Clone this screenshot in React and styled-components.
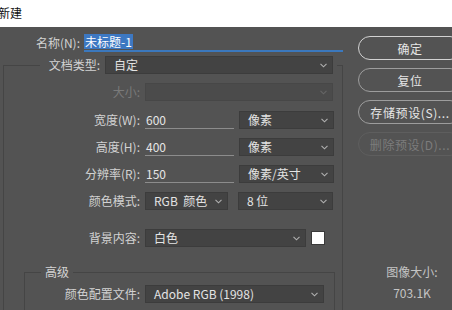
import React from 'react'
import { styled, createGlobalStyle } from 'styled-components'

const Global = createGlobalStyle`
    html, body {
        margin: 0;
        height: 100%;
        overflow: hidden;
        background: #535353;
        font-family: "Noto Sans CJK SC", "Noto Sans", sans-serif;
        font-size: 12px;
    }
`

const TitleBar = styled.div`
    height: 27px;
    background: #fff;
    color: #111;
    font-size: 12px;
    line-height: 26px;
    padding-left: 0;
    text-indent: -2px;
`

const Body = styled.div`
    display: flex;
    gap: 15px;
`

const LeftColumn = styled.div`
    width: 343px;
    flex-shrink: 0;
    padding-top: 8px;
`

const RightColumn = styled.div`
    width: 104px;
    flex-shrink: 0;
    padding-top: 9px;
    display: flex;
    flex-direction: column;
    gap: 8px;
`

const NameRow = styled.div`
    display: flex;
    align-items: center;
    height: 16px;
`

const Label = styled.span`
    width: ${props => props.$w}px;
    flex-shrink: 0;
    text-align: right;
    margin-right: 5px;
    color: ${props => props.$disabled ? '#7a7a7a' : '#d2d2d2'};
    white-space: nowrap;
    line-height: 16px;
`

const NameField = styled.div`
    flex: 1;
    height: 16px;
    border-bottom: 2px solid #3b78bd;
    box-sizing: content-box;
    display: flex;
    align-items: flex-start;
`

const Selected = styled.span`
    background: #3d78c2;
    color: #fff;
    line-height: 15px;
    padding: 0 1px;
`

const Group = styled.fieldset`
    margin: ${props => props.$inner ? '17px 7px 0 20px' : '5px 0 0 3px'};
    padding: ${props => props.$inner ? '5px 0 20px 0' : '9px 0 30px 0'};
    border: 1px solid #454545;
    min-width: 0;
`

const Legend = styled.legend`
    margin-left: ${props => props.$offset}px;
    padding: 0 4px 0 4px;
    color: #d4d4d4;
    line-height: 16px;
`

const LegendRow = styled.div`
    display: flex;
    align-items: center;
`

const Rows = styled.div`
    display: flex;
    flex-direction: column;
    gap: 9px;
`

const Row = styled.div`
    display: flex;
    align-items: center;
    height: 18px;
    margin-top: ${props => props.$extra || 0}px;
`

const SelectBox = styled.div`
    width: ${props => props.$w}px;
    height: 18px;
    box-sizing: border-box;
    flex-shrink: 0;
    margin-left: ${props => props.$ml || 0}px;
    background: ${props => props.$disabled ? '#4b4b4b' : '#434343'};
    border: 1px solid ${props => props.$disabled ? '#474747' : '#3c3c3c'};
    display: flex;
    align-items: center;
    justify-content: space-between;
    padding: 0 5px 0 8px;
    color: #e4e4e4;
    line-height: 16px;
    white-space: pre;
`

const Chevron = styled.svg`
    width: 7px;
    height: 5px;
    flex-shrink: 0;
`

const NumberField = styled.div`
    width: 88px;
    height: 17px;
    flex-shrink: 0;
    border-bottom: 1px solid #8c8c8c;
    color: #e6e6e6;
    line-height: 17px;
    padding-left: 1px;
    box-sizing: content-box;
`

const Swatch = styled.div`
    width: 14px;
    height: 14px;
    box-sizing: border-box;
    margin-left: 5px;
    background: #fff;
    border: 1px solid #3a3a3a;
`

const Button = styled.div`
    height: 24px;
    box-sizing: border-box;
    border-radius: 12px;
    border: 1.5px solid ${props => props.$primary ? '#d2d2d2' : props.$disabled ? '#5e5e5e' : '#9d9d9d'};
    color: ${props => props.$disabled ? '#7c7c7c' : '#e6e6e6'};
    display: flex;
    align-items: center;
    justify-content: center;
    letter-spacing: 0.6px;
    white-space: nowrap;
`

const SizeInfo = styled.div`
    margin-top: 100px;
    display: flex;
    flex-direction: column;
    align-items: center;
    gap: 5px;
    color: #c4c4c4;
    line-height: 16px;
    padding-left: 4px;
`

function Select({ value, w, ml, disabled }) {
    return (
        <SelectBox $w={w} $ml={ml} $disabled={disabled}>
            <span>{value}</span>
            <Chevron viewBox="0 0 7 5">
                <polyline points="0.5,0.8 3.5,3.8 6.5,0.8" fill="none" stroke={disabled ? '#666' : '#b0b0b0'} strokeWidth="1.1" />
            </Chevron>
        </SelectBox>
    )
}

export default function App() {
    return (
        <>
            <Global />
            <TitleBar>新建</TitleBar>
            <Body>
                <LeftColumn>
                    <NameRow>
                        <Label $w={80} style={{ marginRight: 4 }}>名称(N):</Label>
                        <NameField><Selected>未标题-1</Selected></NameField>
                    </NameRow>
                    <Group>
                        <Legend $offset={36}>
                            <LegendRow>
                                <Label $w={56}>文档类型:</Label>
                                <Select value="自定" w={228} />
                            </LegendRow>
                        </Legend>
                        <Rows>
                            <Row>
                                <Label $w={136} $disabled>大小:</Label>
                                <Select value="" w={188} disabled />
                            </Row>
                            <Row $extra={1}>
                                <Label $w={136}>宽度(W):</Label>
                                <NumberField>600</NumberField>
                                <Select value="像素" w={95} ml={5} />
                            </Row>
                            <Row>
                                <Label $w={136}>高度(H):</Label>
                                <NumberField>400</NumberField>
                                <Select value="像素" w={95} ml={5} />
                            </Row>
                            <Row>
                                <Label $w={136}>分辨率(R):</Label>
                                <NumberField>150</NumberField>
                                <Select value="像素/英寸" w={95} ml={5} />
                            </Row>
                            <Row>
                                <Label $w={136}>颜色模式:</Label>
                                <Select value="RGB  颜色" w={83} />
                                <Select value="8 位" w={95} ml={10} />
                            </Row>
                            <Row $extra={10}>
                                <Label $w={136}>背景内容:</Label>
                                <Select value="白色" w={161} />
                                <Swatch />
                            </Row>
                        </Rows>
                        <Group $inner>
                            <Legend $offset={16}>高级</Legend>
                            <Row>
                                <Label $w={115}>颜色配置文件:</Label>
                                <Select value="Adobe RGB (1998)" w={179} />
                            </Row>
                        </Group>
                    </Group>
                </LeftColumn>
                <RightColumn>
                    <Button $primary>确定</Button>
                    <Button>复位</Button>
                    <Button>存储预设(S)...</Button>
                    <Button $disabled>删除预设(D)...</Button>
                    <SizeInfo>
                        <span>图像大小:</span>
                        <span>703.1K</span>
                    </SizeInfo>
                </RightColumn>
            </Body>
        </>
    )
}
